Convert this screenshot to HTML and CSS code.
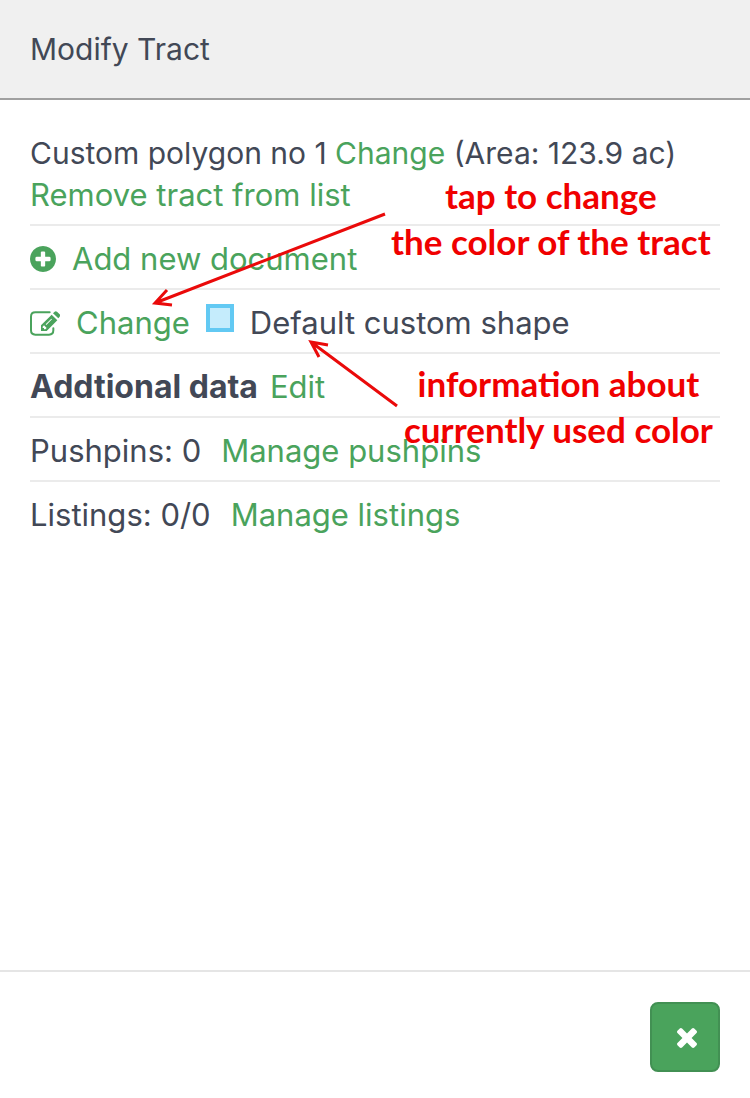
FILE: index.html
```html
<!DOCTYPE html>
<html lang="en">
<head>
<meta charset="utf-8">
<meta name="viewport" content="width=device-width, initial-scale=1">
<title>Modify Tract</title>
<link rel="stylesheet" href="styles.css">
</head>
<body>
<div class="dialog">
  <header class="dialog-header"><h1 class="title">Modify Tract</h1></header>
  <main class="dialog-body">
    <div class="row">
      <div class="summary">Custom polygon no 1 <a class="link" href="#">Change</a> (Area: 123.9 ac)</div>
      <div><a class="link" href="#">Remove tract from list</a></div>
    </div>
    <div class="row line">
      <a class="link line gap-l" href="#">
        <svg class="icon-plus" viewBox="0 0 1536 1536" aria-hidden="true"><path fill="currentColor" d="M1216 832v-128q0-26-19-45t-45-19h-256v-256q0-26-19-45t-45-19h-128q-26 0-45 19t-19 45v256h-256q-26 0-45 19t-19 45v128q0 26 19 45t45 19h256v256q0 26 19 45t45 19h128q26 0 45-19t19-45v-256h256q26 0 45-19t19-45zM1536 768q0 209-103 385.500t-279.500 279.500-385.500 103-385.500-103-279.500-279.500-103-385.500 103-385.500 279.500-279.500 385.500-103 385.500 103 279.500 279.500 103 385.500z"/></svg>
        <span>Add new document</span>
      </a>
    </div>
    <div class="row line gap-l">
      <a class="link line gap-l" href="#">
        <svg class="icon-edit" viewBox="0 0 90 75" aria-hidden="true"><path fill="none" stroke="currentColor" stroke-width="6" stroke-linecap="round" d="M59 4H16Q3 4 3 17v41q0 13 13 13h41q13 0 13-13V52"/><path fill="currentColor" fill-rule="evenodd" d="M33 60V43L65 11l17 17L50 60zM38 47v4h4v4h4l4-4-8-8zM47 40l2 2 17-17-2-2zM69 7l5-5q3-3 7 0l8 8q3 3 0 7l-4 5z"/></svg>
        <span>Change</span>
      </a>
      <span class="swatch"></span>
      <span>Default custom shape</span>
    </div>
    <div class="row line gap-s"><strong class="strong">Addtional data</strong><a class="link" href="#">Edit</a></div>
    <div class="row line gap-xl"><span>Pushpins: 0</span><a class="link" href="#">Manage pushpins</a></div>
    <div class="row line gap-xl"><span>Listings: 0/0</span><a class="link" href="#">Manage listings</a></div>
  </main>
  <footer class="dialog-footer">
    <button class="close" type="button" aria-label="Close"><svg class="icon-close" viewBox="110 366 1188 1188" aria-hidden="true"><path fill="currentColor" d="M1298 1322q0 40-28 68l-136 136q-28 28-68 28t-68-28l-294-294-294 294q-28 28-68 28t-68-28l-136-136q-28-28-28-68t28-68l294-294-294-294q-28-28-28-68t28-68l136-136q28-28 68-28t68 28l294 294 294-294q28-28 68-28t68 28l136 136q28 28 28 68t-28 68l-294 294 294 294q28 28 28 68z"/></svg></button>
  </footer>
  <svg class="arrows" width="750" height="500" viewBox="0 0 750 500" fill="none" stroke="#ea0a0a" stroke-width="3" aria-hidden="true">
    <path d="M385 214L155 303M167 290L155 303L172 305"/>
    <path d="M397 406L311 342M328 345L311 342L319 357"/>
  </svg>
  <p class="note note-change">tap to change<br>the color of the tract</p>
  <p class="note note-info">information about<br>currently used color</p>
</div>
</body>
</html>
```
FILE: styles.css
```css
* { box-sizing: border-box; }
body {
  margin: 0;
  background: #fff;
  color: #424856;
  font-family: Inter, sans-serif;
  font-size: 31px;
  line-height: 42px;
}
.dialog {
  position: relative;
  display: flex;
  flex-direction: column;
  min-height: 100vh;
}
.dialog-header {
  padding: 28px 30px;
  background: #f0f0f0;
  border-bottom: 2px solid #a0a0a0;
}
.title {
  margin: 0;
  font-size: 30px;
  font-weight: 400;
}
.dialog-body { flex: 1; padding: 20px 30px; }
.row { padding: 12px 0 8px; border-bottom: 2px solid #ebebeb; }
.row:last-child { border-bottom: 0; }
.summary { font-size: 30px; }
.strong { font-size: 32px; }
.line { display: flex; align-items: center; }
.link { color: #4aa35c; text-decoration: none; }
.gap-s { gap: 12px; }
.gap-l { gap: 16px; }
.gap-xl { gap: 20px; }
.icon-plus { width: 26px; height: 26px; }
.icon-edit { width: 30px; height: 25px; }
.swatch {
  width: 28px;
  height: 28px;
  margin-bottom: 10px;
  background: #c5ecfc;
  border: 4px solid #62c9f3;
}
.dialog-footer {
  display: flex;
  justify-content: flex-end;
  padding: 30px 30px 26px;
  border-top: 2px solid #e5e5e5;
}
.close {
  display: flex;
  align-items: center;
  justify-content: center;
  width: 70px;
  height: 70px;
  padding: 2px 0 0 4px;
  background: #4aa35c;
  border: 2px solid #429053;
  border-radius: 8px;
  color: #fff;
}
.icon-close { width: 20px; height: 20px; }
.arrows { position: absolute; top: 0; left: 0; }
.note {
  position: absolute;
  margin: 0;
  color: #f00000;
  font-family: Lato, sans-serif;
  font-size: 35px;
  font-weight: 700;
  line-height: 46px;
  text-align: center;
  white-space: nowrap;
}
.note-change { top: 172px; left: 391px; }
.note-info { top: 360px; left: 404px; }
```
